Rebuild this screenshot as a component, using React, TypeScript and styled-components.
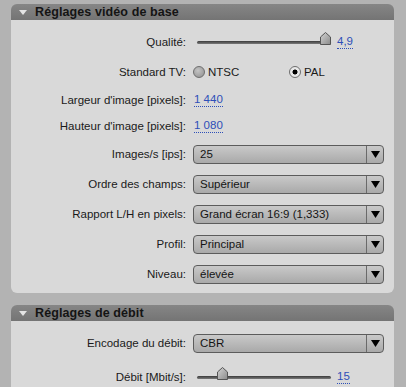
import styled, { createGlobalStyle } from 'styled-components';

const GlobalStyle = createGlobalStyle`
  html, body {
    margin: 0;
    padding: 0;
    background: #b3b3b3;
  }
  body {
    font-family: 'Liberation Sans', Arial, sans-serif;
    font-size: 11.5px;
    color: #1a1a1a;
  }
`;

type Row =
  | { kind: 'slider'; label: string; value: string; pct: number; h: number }
  | { kind: 'radio'; label: string; options: string[]; checked: number; h: number }
  | { kind: 'link'; label: string; value: string; h: number }
  | { kind: 'select'; label: string; value: string; h: number };

const videoRows: Row[] = [
  { kind: 'slider', label: 'Qualité:', value: '4,9', pct: 1, h: 30 },
  { kind: 'radio', label: 'Standard TV:', options: ['NTSC', 'PAL'], checked: 1, h: 29 },
  { kind: 'link', label: "Largeur d'image [pixels]:", value: '1 440', h: 27 },
  { kind: 'link', label: "Hauteur d'image [pixels]:", value: '1 080', h: 26 },
  { kind: 'select', label: 'Images/s [ips]:', value: '25', h: 30 },
  { kind: 'select', label: 'Ordre des champs:', value: 'Supérieur', h: 30 },
  { kind: 'select', label: 'Rapport L/H en pixels:', value: 'Grand écran 16:9 (1,333)', h: 30 },
  { kind: 'select', label: 'Profil:', value: 'Principal', h: 30 },
  { kind: 'select', label: 'Niveau:', value: 'élevée', h: 30 },
];

const bitrateRows: Row[] = [
  { kind: 'select', label: 'Encodage du débit:', value: 'CBR', h: 30 },
  { kind: 'slider', label: 'Débit [Mbit/s]:', value: '15', pct: 0.16, h: 38 },
];

function Thumb() {
  return (
    <svg width="11" height="13" viewBox="0 0 11 13">
      <defs>
        <linearGradient id="thumbFill" x1="0" y1="0" x2="1" y2="1">
          <stop offset="0" stopColor="#d4d4d4" />
          <stop offset="1" stopColor="#8a8a8a" />
        </linearGradient>
      </defs>
      <path d="M5.5 0.5 L10.5 5 L10.5 12.5 L0.5 12.5 L0.5 5 Z" fill="url(#thumbFill)" stroke="#555" strokeWidth="1" strokeLinejoin="round" />
    </svg>
  );
}

function Slider({ pct, value }: { pct: number; value: string }) {
  return (
    <SliderWrap>
      <Track>
        <ThumbHolder style={{ left: `${pct * (TRACK_W - 11)}px` }}>
          <Thumb />
        </ThumbHolder>
      </Track>
      <LinkValue>{value}</LinkValue>
    </SliderWrap>
  );
}

function Control({ row }: { row: Row }) {
  switch (row.kind) {
    case 'slider':
      return <Slider pct={row.pct} value={row.value} />;
    case 'radio':
      return (
        <RadioGroup>
          {row.options.map((opt, i) => (
            <RadioOption key={opt}>
              <RadioDot $checked={i === row.checked} />
              {opt}
            </RadioOption>
          ))}
        </RadioGroup>
      );
    case 'link':
      return <LinkValue>{row.value}</LinkValue>;
    case 'select':
      return (
        <Select>
          <SelectText>{row.value}</SelectText>
          <SelectArrow>
            <svg width="9" height="7" viewBox="0 0 9 7">
              <path d="M0 0 L9 0 L4.5 7 Z" fill="#000" />
            </svg>
          </SelectArrow>
        </Select>
      );
  }
}

function Section({ title, rows }: { title: string; rows: Row[] }) {
  return (
    <Panel>
      <Header>
        <Caret />
        <Title>{title}</Title>
      </Header>
      <Body>
        {rows.map((row) => (
          <FieldRow key={row.label} $h={row.h}>
            <Label>{row.label}</Label>
            <Control row={row} />
          </FieldRow>
        ))}
      </Body>
    </Panel>
  );
}

export default function App() {
  return (
    <>
      <GlobalStyle />
      <Page>
        <Section title="Réglages vidéo de base" rows={videoRows} />
        <Section title="Réglages de débit" rows={bitrateRows} />
      </Page>
    </>
  );
}

// ─── Styles ───────────────────────────────────────────────────────────────

const TRACK_W = 134;

const Page = styled.div`
  display: flex;
  flex-direction: column;
  gap: 12px;
  padding: 4px 12px 0 11px;
  height: 387px;
  box-sizing: border-box;
  overflow: hidden;
`;

const Panel = styled.section`
  display: flex;
  flex-direction: column;
  flex-shrink: 0;
`;

const Header = styled.div`
  height: 16px;
  display: flex;
  align-items: center;
  padding-left: 8px;
  background: linear-gradient(#868686, #747474);
  border-radius: 6px 6px 0 0;
`;

const Caret = styled.span`
  width: 0;
  height: 0;
  border-left: 4px solid transparent;
  border-right: 4px solid transparent;
  border-top: 5px solid #e4e4e4;
  margin-top: 1px;
`;

const Title = styled.span`
  margin-left: 8px;
  font-weight: bold;
  font-size: 12.5px;
  color: #141414;
  letter-spacing: 0.1px;
`;

const Body = styled.div`
  background: #d9d9d9;
  border-radius: 0 0 6px 6px;
  padding: 7px 10px 4px 0;
`;

const FieldRow = styled.div<{ $h: number }>`
  display: grid;
  grid-template-columns: 175px 1fr;
  column-gap: 7px;
  align-items: center;
  height: ${({ $h }) => $h}px;
`;

const Label = styled.span`
  text-align: right;
  white-space: nowrap;
  color: #1a1a1a;
`;

const SliderWrap = styled.div`
  display: flex;
  align-items: center;
  gap: 5px;
  padding-left: 4px;
`;

const Track = styled.div`
  position: relative;
  width: ${TRACK_W}px;
  height: 3px;
  border-radius: 2px;
  background: linear-gradient(#3a3a3a, #7a7a7a);
`;

const ThumbHolder = styled.div`
  position: absolute;
  top: -9px;
  line-height: 0;
`;

const LinkValue = styled.span`
  color: #2d4fb8;
  border-bottom: 1px dotted #2d4fb8;
  line-height: 13px;
  align-self: center;
  justify-self: start;
  margin-left: 1px;
`;

const RadioGroup = styled.div`
  display: grid;
  grid-template-columns: 96px auto;
  align-items: center;
`;

const RadioOption = styled.label`
  display: flex;
  align-items: center;
  gap: 3px;
`;

const RadioDot = styled.span<{ $checked: boolean }>`
  width: 10px;
  height: 10px;
  border-radius: 50%;
  border: 1px solid #6e6e6e;
  background: ${({ $checked }) =>
    $checked
      ? 'radial-gradient(circle, #000 0 2.2px, #e8e8e8 2.8px 100%)'
      : 'radial-gradient(circle at 40% 35%, #c4c4c4, #8e8e8e)'};
`;

const Select = styled.div`
  display: flex;
  align-items: stretch;
  height: 19px;
  box-sizing: border-box;
  border: 1px solid #5c5c5c;
  border-radius: 4px;
  background: linear-gradient(#c9c9c9, #a9a9a9);
  overflow: hidden;
`;

const SelectText = styled.span`
  flex: 1;
  display: flex;
  align-items: center;
  padding-left: 6px;
  color: #141414;
`;

const SelectArrow = styled.span`
  width: 16px;
  display: flex;
  align-items: center;
  justify-content: center;
  border-left: 1px solid #6a6a6a;
`;
